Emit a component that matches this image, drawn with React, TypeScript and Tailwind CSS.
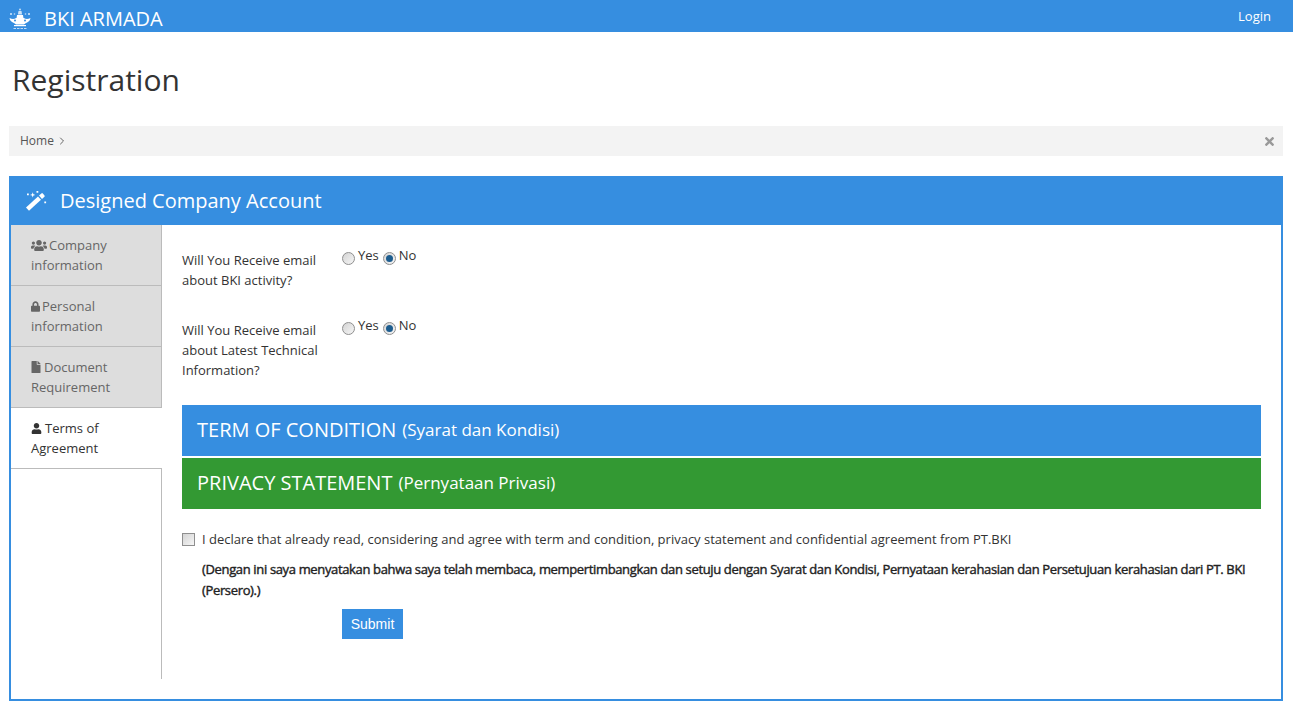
import { FaUsers, FaLock, FaFile, FaUser, FaTimes } from "react-icons/fa";
import { ChevronRight } from "lucide-react";

const Emblem = () => (
  <svg width="24" height="22" viewBox="0 0 24 22" fill="#fff">
    <circle cx="12" cy="1.5" r="1" opacity="0.7" />
    <path d="M10.500 3h3l.6 3.500h-4.200z" opacity="0.75" />
    <circle cx="3" cy="6" r="1" opacity="0.8" />
    <circle cx="6.500" cy="6" r="0.8" opacity="0.7" />
    <circle cx="17.500" cy="6" r="0.8" opacity="0.7" />
    <circle cx="21" cy="6" r="1" opacity="0.8" />
    <path d="M9 7h6l.5 3.500H8.500z" />
    <path d="M1.500 10c1.800 1 3.300 1 5.500.8l.8-.8h8.400l.8.800c2.200.2 3.700.2 5.500-.8-.4 2.200-1.500 3.400-3 4.300-1.300.8-2.600 1.300-3.500 2.200H8c-.9-.9-2.200-1.400-3.500-2.200-1.500-.9-2.600-2.100-3-4.300z" />
    <circle cx="7" cy="12.500" r="1" fill="#368ee0" />
    <circle cx="17" cy="12.500" r="1" fill="#368ee0" />
    <rect x="6" y="17" width="12" height="1.200" />
    <rect x="5.500" y="20" width="2.500" height="1" opacity="0.7" />
    <rect x="9" y="20" width="2.500" height="1" opacity="0.7" />
    <rect x="12.500" y="20" width="2.500" height="1" opacity="0.7" />
    <rect x="16" y="20" width="2.500" height="1" opacity="0.7" />
  </svg>
);

const Wand = () => (
  <svg width="22" height="20" viewBox="0 0 22 20" fill="#fff">
    <path d="M1 16.500 13 5.500l3 3.300L4 19.800z" />
    <path d="M14 4.600l2.400-2.200a1 1 0 0 1 1.400.1l1.700 1.900a1 1 0 0 1-.1 1.400L17 8z" />
    <path d="M7 3.200l.7-2 .7 2 2 .7-2 .7-.7 2-.7-2-2-.7z" />
    <path d="M2 2.500h1.800v1.800H2zM11.500 0h1.800v1.800h-1.800zM19.300 10.500h1.800v1.800h-1.800z" />
  </svg>
);

const Radio = ({ on }: { on?: boolean }) => (
  <span className="flex w-[13px] h-[13px] rounded-full border border-[#8f8f8f] bg-gradient-to-br from-[#d4d4d4] to-[#f6f6f6] items-center justify-center shrink-0">
    {on && <span className="w-[7px] h-[7px] rounded-full bg-[#1c5c8e]" />}
  </span>
);

const tabs = [
  { Icon: FaUsers, a: "Company", b: "information", cls: "w-[16px] h-[13px]", gap: "gap-[2px]" },
  { Icon: FaLock, a: "Personal", b: "information", cls: "w-[9px] h-[11px]", gap: "gap-[2px]" },
  { Icon: FaFile, a: "Document", b: "Requirement", cls: "w-[10px] h-[12px]", gap: "gap-[3px]" },
];

const Question = ({ lines }: { lines: string[] }) => (
  <div className="flex">
    <div className="w-[160px] pt-[5px] leading-[20px] text-[13px]">
      {lines.map((l) => (
        <div key={l}>{l}</div>
      ))}
    </div>
    <div className="flex items-start h-[20px] leading-[20px] text-[13px]">
      <span className="flex mt-[7px] mr-[3px]"><Radio /></span>
      <span className="mr-[4px]">Yes</span>
      <span className="flex mt-[7px] mr-[3px]"><Radio on /></span>
      <span>No</span>
    </div>
  </div>
);

export default function App() {
  return (
    <div className="min-h-[712px] bg-white text-[#333] text-[13px] overflow-hidden" style={{ fontFamily: '"Open Sans", sans-serif' }}>
      <header className="h-[32px] bg-[#368ee0] text-white flex items-center pl-[8px] pr-[22px]">
        <span className="flex mt-[5px]"><Emblem /></span>
        <span className="ml-[12px] text-[20px] leading-[32px] mt-[5px]">BKI ARMADA</span>
        <span className="ml-auto text-[13px] mt-[1px]">Login</span>
      </header>

      <h1 className="text-[30px] leading-[40px] text-[#333] ml-[12px] mt-[28px] font-normal">Registration</h1>

      <div className="ml-[9px] mr-[10px] mt-[26px] h-[30px] bg-[#f3f3f3] flex items-center pl-[11px] pr-[8px] text-[12px] text-[#555]">
        <span>Home</span>
        <ChevronRight size={12} strokeWidth={1.8} className="ml-[2px]" />
        <FaTimes className="ml-auto -mr-[1px] text-[#999] text-[13px]" />
      </div>

      <section className="ml-[9px] mr-[10px] mt-[20px] h-[525px] border-2 border-[#368ee0] flex flex-col">
        <div className="h-[48px] -mt-px bg-[#368ee0] text-white flex items-center pl-[14px] shrink-0">
          <Wand />
          <span className="ml-[13px] text-[20px] leading-[28px]">Designed Company Account</span>
        </div>

        <div className="flex flex-1 min-h-0">
          <nav className="w-[151px] shrink-0 h-[454px] border-r border-[#bbb] text-[13px] leading-[20px]">
            {tabs.map(({ Icon, a, b, cls, gap }) => (
              <div key={a} className="h-[61px] bg-[#ddd] border-b border-[#bbb] pl-[20px] pt-[10px] text-[#666]">
                <div className={`flex items-center ${gap}`}>
                  <Icon className={cls} />
                  <span>{a}</span>
                </div>
                <div>{b}</div>
              </div>
            ))}
            <div className="h-[61px] w-[151px] bg-white border-b border-[#bbb] pl-[20px] pt-[10px] text-[#333]">
              <div className="flex items-center gap-[3px]">
                <FaUser className="w-[11px] h-[11px]" />
                <span>Terms of</span>
              </div>
              <div>Agreement</div>
            </div>
          </nav>

          <div className="flex-1 min-w-0 pl-[20px] pr-[20px] pt-[20px]">
            <Question lines={["Will You Receive email", "about BKI activity?"]} />
            <div className="h-[25px]" />
            <Question lines={["Will You Receive email", "about Latest Technical", "Information?"]} />

            <div className="mt-[25px] h-[51px] pb-[2px] bg-[#368ee0] text-white flex items-center pl-[15px]">
              <span className="text-[20px]">TERM OF CONDITION</span>
              <span className="text-[17px] ml-[6px] mt-[1px]">(Syarat dan Kondisi)</span>
            </div>
            <div className="mt-[2px] h-[51px] pb-[2px] bg-[#339933] text-white flex items-center pl-[15px]">
              <span className="text-[20px]">PRIVACY STATEMENT</span>
              <span className="text-[17px] ml-[6px] mt-[1px]">(Pernyataan Privasi)</span>
            </div>

            <div className="mt-[20px] flex items-center h-[20px] leading-[20px]">
              <span className="w-[13px] h-[13px] border border-[#8f8f8f] bg-gradient-to-br from-[#d4d4d4] to-[#f6f6f6] shrink-0" />
              <span className="ml-[7px]">
                I declare that already read, considering and agree with term and condition, privacy statement and confidential agreement from PT.BKI
              </span>
            </div>
            <p className="mt-[10px] ml-[20px] text-[13px] leading-[21px] text-[#222] tracking-[-0.35px] [-webkit-text-stroke:0.4px_#222]">
              (Dengan ini saya menyatakan bahwa saya telah membaca, mempertimbangkan dan setuju dengan Syarat dan Kondisi, Pernyataan kerahasian dan Persetujuan kerahasian dari PT. BKI (Persero).)
            </p>
            <button className="mt-[8px] ml-[160px] w-[61px] h-[30px] bg-[#368ee0] text-white text-[14px] block" style={{ fontFamily: '"Liberation Sans", sans-serif' }}>
              Submit
            </button>
          </div>
        </div>
      </section>
    </div>
  );
}
